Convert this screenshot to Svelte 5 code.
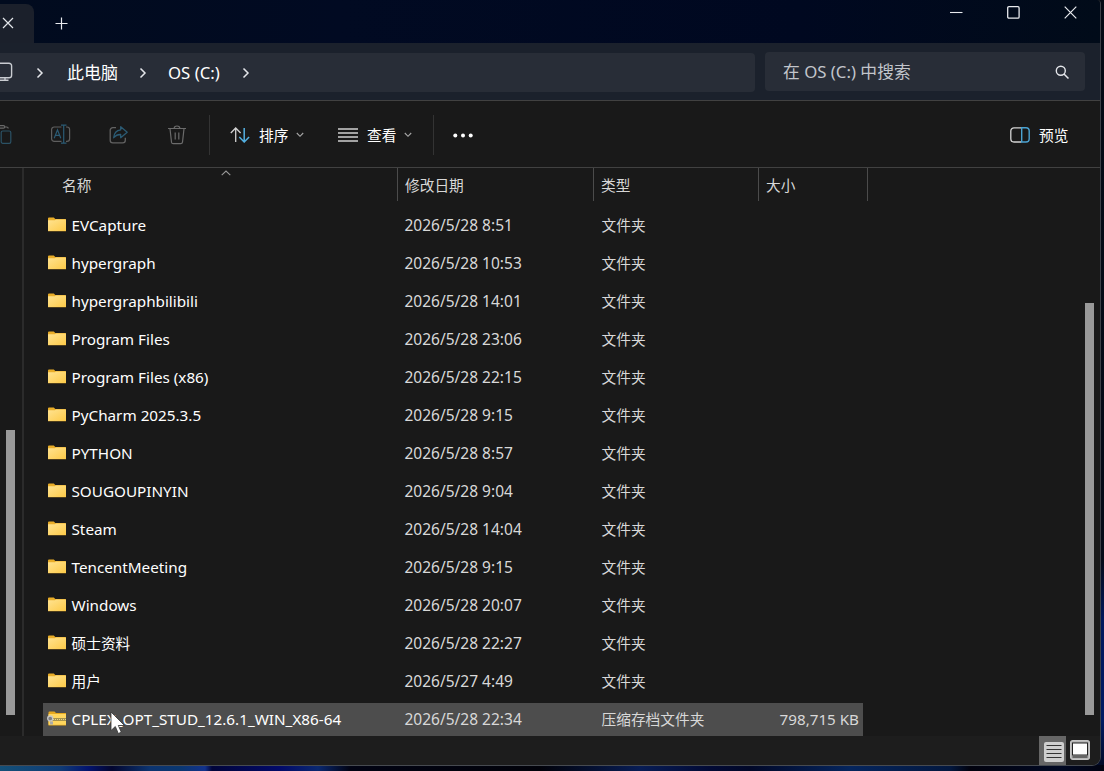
<script>
  const folders = [
    ['EVCapture', '2026/5/28 8:51'],
    ['hypergraph', '2026/5/28 10:53'],
    ['hypergraphbilibili', '2026/5/28 14:01'],
    ['Program Files', '2026/5/28 23:06'],
    ['Program Files (x86)', '2026/5/28 22:15'],
    ['PyCharm 2025.3.5', '2026/5/28 9:15'],
    ['PYTHON', '2026/5/28 8:57'],
    ['SOUGOUPINYIN', '2026/5/28 9:04'],
    ['Steam', '2026/5/28 14:04'],
    ['TencentMeeting', '2026/5/28 9:15'],
    ['Windows', '2026/5/28 20:07'],
    ['硕士资料', '2026/5/28 22:27'],
    ['用户', '2026/5/27 4:49']
  ].map(([name, date]) => ({ name, date, type: '文件夹', size: '' }));

  const rows = [
    ...folders,
    { name: 'CPLEX_OPT_STUD_12.6.1_WIN_X86-64', date: '2026/5/28 22:34', type: '压缩存档文件夹', size: '798,715 KB', zip: true }
  ];

  const isLatin = (text) => /^[\x20-\x7e]+$/.test(text);
</script>

{#snippet chevron()}
  <svg class="crumb-chevron" width="8" height="12" viewBox="0 0 8 12"><path d="M1.5 1.5 6 6 1.5 10.5" fill="none" stroke="#e4e6ea" stroke-width="1.5" /></svg>
{/snippet}

{#snippet down()}
  <svg class="down" width="8" height="6" viewBox="0 0 8 6"><path d="M.8 1 4 4.3 7.2 1" fill="none" stroke="#a8a8a8" stroke-width="1.1" /></svg>
{/snippet}

<div class="desktop">
  <div class="window">
    <header class="titlebar">
      <div class="tab">
        <svg width="12" height="12" viewBox="0 0 12 12"><path d="M1 1 11 11M11 1 1 11" stroke="#e3e6ea" stroke-width="1.2" /></svg>
      </div>
      <svg class="plus" width="13" height="13" viewBox="0 0 13 13"><path d="M6.5.5v12M.5 6.5h12" stroke="#e8eaee" stroke-width="1.2" /></svg>
      <div class="controls">
        <svg width="13" height="13" viewBox="0 0 13 13"><path d="M0 6.5h12.5" stroke="#e8eaee" stroke-width="1.1" /></svg>
        <svg width="13" height="13" viewBox="0 0 13 13"><rect x=".7" y=".7" width="11.4" height="11.4" rx="1.2" fill="none" stroke="#e8eaee" stroke-width="1.3" /></svg>
        <svg width="13" height="13" viewBox="0 0 13 13"><path d="M.7.7 12.3 12.3M12.3.7.7 12.3" stroke="#e8eaee" stroke-width="1.2" /></svg>
      </div>
    </header>

    <div class="address-row">
      <nav class="address">
        <svg class="pc" width="13" height="20" viewBox="0 0 13 20"><path d="M0 1.2h9a2.6 2.6 0 0 1 2.6 2.6v9.400a2.600 2.600 0 0 1-2.600 2.600H0M0 18.200h8.500M5 16v2" fill="none" stroke="#c9ccd1" stroke-width="1.4" /></svg>
        <span class="c1">{@render chevron()}</span>
        <span class="crumb pcname">此电脑</span>
        <span class="c2">{@render chevron()}</span>
        <span class="crumb drive">OS (C:)</span>
        <span class="c3">{@render chevron()}</span>
      </nav>
      <div class="search">
        <span>在 OS (C:) 中搜索</span>
        <svg width="15" height="15" viewBox="0 0 15 15"><circle cx="5.800" cy="5.800" r="4.500" fill="none" stroke="#e4e6ea" stroke-width="1.400" /><path d="M9 9 13.500 13.500" stroke="#e4e6ea" stroke-width="1.500" /></svg>
      </div>
    </div>

    <div class="toolbar">
      <svg class="paste" width="12" height="22" viewBox="0 0 12 22"><g fill="none" stroke-width="1.200"><path d="M0 1.700h3.500q1.200 0 1.200 1.200t-1.200 1.200H0M4.700 3h2q1.500 0 1.500 1.600" stroke="#696969" /><rect x="1.200" y="7" width="9.600" height="12.300" rx="1.600" stroke="#2b5265" /></g></svg>
      <svg class="rename" width="22" height="22" viewBox="0 0 22 22"><g fill="none" stroke-width="1.200"><path d="M11.500 3H4.200A2.600 2.600 0 0 0 1.600 5.600v9.200a2.600 2.600 0 0 0 2.600 2.600h7.300M16 3h1a2.600 2.600 0 0 1 2.600 2.600v9.200a2.600 2.600 0 0 1-2.600 2.600h-1" stroke="#5e5e5e" /><path d="m4.200 14.300 3.300-8.500 3.300 8.500M5.400 11.300h4.200M11 1.200h5.500M11 19.200h5.500M13.700 1.200v18" stroke="#2b5b74" /></g></svg>
      <svg class="share" width="20" height="20" viewBox="0 0 20 20"><g fill="none" stroke-width="1.300" stroke-linejoin="round"><path d="M7 2.700H3.800a2.600 2.600 0 0 0-2.600 2.600v9.900a2.600 2.600 0 0 0 2.600 2.600h9.900a2.600 2.600 0 0 0 2.600-2.600v-2.500" stroke="#626262" /><path d="M11.700 1.700 18.200 7.200 11.700 12.700V9.500Q7.700 9.200 4.700 12.700 5.200 5.500 11.700 4.800Z" stroke="#2b5b74" /></g></svg>
      <svg class="trash" width="20" height="20" viewBox="0 0 20 20"><path d="M1 3.500h18M7.200 3.200a2.800 2.200 0 0 1 5.600 0M3 3.800l1.500 13.400q.2 1.500 1.700 1.500h7.600q1.500 0 1.700-1.500L17 3.800M8.200 7.500v7M11.800 7.500v7" fill="none" stroke="#6b6b6b" stroke-width="1.200" /></svg>
      <i class="sep"></i>
      <div class="tool sort">
        <svg width="20" height="16" viewBox="0 0 20 16"><path d="M5.700 15V1M.8 6 5.700 1 10.600 6" fill="none" stroke="#d2d2d2" stroke-width="1.300" /><path d="M14.200 1v14M9.300 10l4.900 5 4.900-5" fill="none" stroke="#53afe0" stroke-width="1.500" /></svg>
        <span>排序</span>{@render down()}
      </div>
      <div class="tool view">
        <svg width="20" height="14" viewBox="0 0 20 14"><path d="M0 1h20M0 5h20M0 9h20M0 13h20" stroke="#d0d0d0" stroke-width="1.300" /></svg>
        <span>查看</span>{@render down()}
      </div>
      <i class="sep second"></i>
      <svg class="more" width="20" height="5" viewBox="0 0 20 5"><g fill="#fff"><circle cx="2.300" cy="2.500" r="2" /><circle cx="10" cy="2.500" r="2" /><circle cx="17.700" cy="2.500" r="2" /></g></svg>
      <div class="tool preview">
        <svg width="20" height="16" viewBox="0 0 20 16"><path d="M11.200.8H4A3.200 3.200 0 0 0 .8 4v7.800A3.200 3.200 0 0 0 4 15h7.200" fill="none" stroke="#d4d4d4" stroke-width="1.300" /><path d="M11.700.8H16A3.200 3.200 0 0 1 19.200 4v7.800A3.200 3.200 0 0 1 16 15h-4.300Z" fill="none" stroke="#4ba3d2" stroke-width="1.400" /></svg>
        <span>预览</span>
      </div>
    </div>

    <div class="body">
      <aside><div class="thumb"></div></aside>
      <main>
        <div class="columns">
          <span class="name">名称<svg width="10" height="6" viewBox="0 0 10 6"><path d="M.7 5.200 5 1 9.300 5.200" fill="none" stroke="#999" stroke-width="1.100" /></svg></span>
          <span>修改日期</span>
          <span>类型</span>
          <span class="size-head">大小</span>
        </div>
        <div class="list">
          {#each rows as row}
            <div class="row" class:selected={row.zip}>
              {#if row.zip}
                <svg class="icon" width="20" height="15" viewBox="0 0 20 15"><path d="M1.500 1.500Q1.500.5 2.500.5h5l1.500 1.500h10v12.500h-17.500Z" fill="#e7a91f" /><path d="M1.500 3h17.500v10.800h-17.500Z" fill="#ffd65e" /><path d="M5 7h14v3H5Z" fill="#a6924b" /><path d="M6 8.500h13" stroke="#e5d58f" stroke-dasharray="1 1" /><circle cx="3.200" cy="7.500" r="2.500" fill="#7d7d7d" stroke="#c7c7c7" stroke-width="1.300" /><path d="M3 10.500h3v3H3Z" fill="#a9a9a9" /></svg>
              {:else}
                <svg class="icon" width="20" height="15" viewBox="0 0 20 15"><path d="M1 1.500Q1 .5 2 .5h4.800L8.300 2h9.900q.8 0 .8.800v11.500H1Z" fill="#e9ad28" /><path d="M1 3.300h7L8.800 2.500H19v10.900q0 .6-.8.600H1.800q-.8 0-.8-.6Z" fill="url(#folder)" /></svg>
              {/if}
              <span class="filename" class:latin={isLatin(row.name)}>{row.name}</span>
              <span class="date">{row.date}</span>
              <span class="type">{row.type}</span>
              <span class="size">{row.size}</span>
            </div>
          {/each}
        </div>
        <div class="thumb main-thumb"></div>
      </main>
    </div>

    <footer>
      <div class="details-button">
        <svg width="20" height="20" viewBox="0 0 20 20"><rect width="20" height="20" rx="2" fill="#cfcfcf" /><path d="M2.500 3.500h15M2.500 7.500h15M2.500 11.500h15M2.500 15.500h15" stroke="#343434" /></svg>
      </div>
      <svg class="large" width="20" height="20" viewBox="0 0 20 20"><rect x=".7" y=".7" width="18.600" height="18.600" rx="2" fill="#aaa" stroke="#c5c5c5" stroke-width="1.400" /><rect x="2.500" y="3" width="15" height="12" fill="#fff" stroke="#222" /><path d="M2.500 17h15" stroke="#666" stroke-width="2" /></svg>
    </footer>
  </div>
  <svg class="cursor" width="16" height="24" viewBox="0 0 16 24"><path d="M1 1v18.500l4.300-4 3 7 3-1.300-3-6.700h6.200Z" fill="#fff" stroke="#343434" stroke-width=".8" /></svg>
  <svg width="0" height="0"><defs><linearGradient id="folder" x1="0" y1="0" x2="1" y2="1"><stop stop-color="#ffe391" /><stop offset="1" stop-color="#fdca48" /></linearGradient></defs></svg>
</div>

<style>
  :global(body) { overflow: hidden; }
  svg { display: block; flex: none; }
  .desktop {
    position: relative; width: 1104px; height: 771px; overflow: hidden; box-sizing: border-box; padding-right: 3px;
    font: 14.7px/20px "Noto Sans", "Noto Sans CJK SC", sans-serif; color: #fff;
    background:
      linear-gradient(90deg, #145078 0, #103c75 60px, #03146f 88px, #03062f 112px, #0c3470 150px, #0a3770 180px, #12328c 205px, #01053a 212px, #020a69 280px, #0a2870 318px, #010313 350px, #01020a 540px, #081d55 640px, #020a35 710px, #010828 750px, #05255d 850px, #03183f 950px, #01020e 970px, #010923 1060px, #010311 100%) 0 765px / 100% 6px no-repeat,
      linear-gradient(#030a14 0, #040b18 560px, #01185c 620px, #011a62 720px, #020920 771px);
  }
  .window {
    width: 1101px; height: 766px; box-sizing: border-box; display: flex; flex-direction: column; overflow: hidden;
    border-right: 1px solid #3c4047; border-bottom: 1px solid #464a50; border-radius: 0 4px 9px 0; background: #191919;
  }
  .titlebar { height: 43px; flex: none; display: flex; align-items: flex-start; background: linear-gradient(90deg, #010b1e 0, #010a22 340px, #000820 800px, #010b19 1100px); }
  .tab { width: 34px; height: 39px; margin-top: 4px; box-sizing: border-box; padding: 13px 0 0 2px; background: #1b202b; border-radius: 0 8px 0 0; }
  .plus { margin: 17px 0 0 21px; }
  .controls { margin: 6px 23px 0 auto; display: flex; gap: 44px; }
  .address-row { height: 57px; flex: none; box-sizing: border-box; padding: 9px 15px 0 0; display: flex; gap: 10px; background: #1b212c; }
  .address { width: 755px; height: 39px; margin-top: 1px; border-radius: 0 4px 4px 0; background: #282d37; display: flex; align-items: center; font-size: 16.8px; }
  .pc { margin-bottom: 2px; }
  .c1 { margin-left: 23px; }
  .pcname { margin-left: 23px; width: 72px; font-size: 17px; }
  .c2 { width: 29px; }
  .drive { width: 74px; }
  .search { flex: 1; height: 39px; border-radius: 4px; background: #282d37; display: flex; align-items: center; justify-content: space-between; padding: 1px 15px 0 18px; box-sizing: border-box; color: #c2c5cb; font-size: 16.8px; }
  .toolbar { height: 68px; flex: none; box-sizing: border-box; border-top: 1px solid #414141; border-bottom: 1px solid #414141; display: flex; align-items: center; padding: 1px 31px 0 0; }
  .rename { margin-left: 38px; }
  .share { margin-left: 37px; }
  .trash { margin-left: 38px; }
  .sep { width: 1px; height: 40px; background: #333; margin-left: 22px; }
  .second { margin-left: 21px; }
  .tool { display: flex; align-items: center; }
  .tool span { margin-left: 9px; width: 30px; white-space: nowrap; }
  .down { margin-left: 7px; }
  .sort { margin-left: 20px; }
  .sort .down, .view .down { margin-right: 0; }
  .view { margin-left: 34px; }
  .more { margin-left: 19px; margin-top: 1px; }
  .preview { margin-left: auto; }
  .body { height: 568px; flex: none; display: flex; overflow: hidden; }
  aside { width: 22px; box-sizing: border-box; padding: 262px 0 0 6px; flex: none; }
  .thumb { width: 9px; height: 285px; background: #999; }
  main { flex: 1; position: relative; border-left: 2px solid #2b2b2b; }
  .columns { height: 33px; display: grid; grid-template-columns: 374px 196px 165px 109px; color: #d7d7d7; }
  .columns span { padding: 6.5px 0 0 7px; border-right: 1px solid #4b4b4b; }
  .columns .name { padding-left: 38px; display: flex; }
  .columns .name svg { margin: -5px 0 0 130px; }
  .list { padding: 7px 0 0 19px; }
  .row { width: 820px; height: 33.077px; margin-bottom: 5px; display: grid; grid-template-columns: 28.5px 333px 197px 164px 1fr; align-items: center; box-sizing: border-box; }
  .selected { background: #4d4d4d; }
  .icon { margin-left: 4px; margin-top: -1px; }
  .filename, .date, .size { white-space: nowrap; }
  .latin { font-size: 15.25px; }
  .date { font-size: 15.5px; }
  .date, .type, .size { color: #d8d8d8; }
  .size { justify-self: end; padding-right: 4px; font-size: 15.2px; }
  .main-thumb { position: absolute; left: 1061px; top: 135px; height: 412px; }
  footer { flex: 1; background: #1d1d1d; display: flex; padding-left: 1039px; gap: 4px; }
  .details-button { width: 27px; height: 29px; background: #666; padding: 6px 0 0 5px; box-sizing: border-box; }
  .large { margin-top: 4px; }
  .cursor { position: absolute; left: 110px; top: 711px; }
</style>
